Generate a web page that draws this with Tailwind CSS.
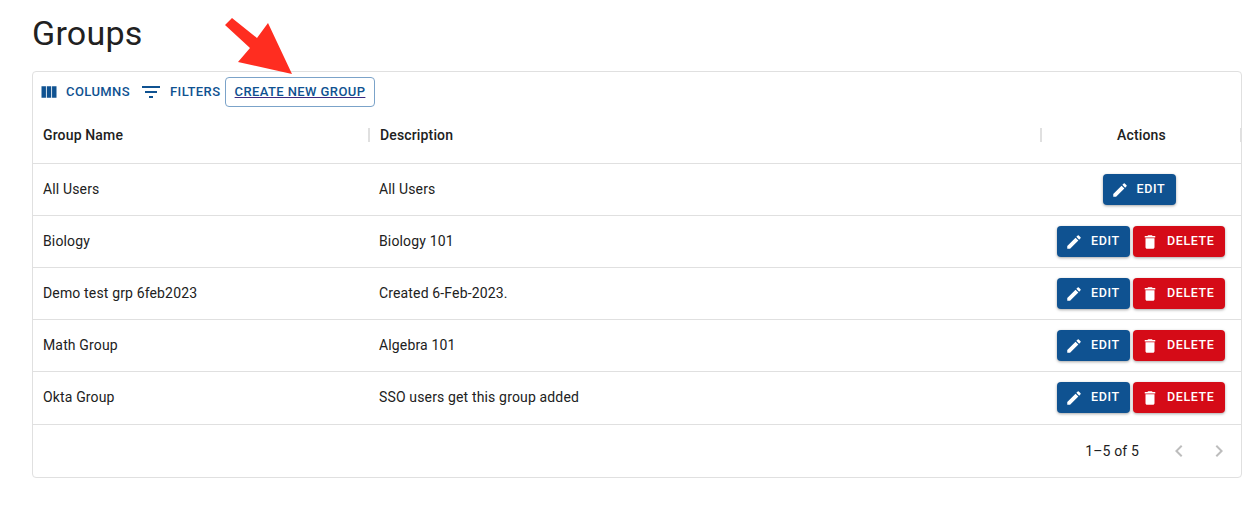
<!doctype html>
<html><head><meta charset="utf-8"><script src="https://cdn.jsdelivr.net/npm/@tailwindcss/browser@4"></script></head>
<body class="bg-white font-['Roboto',sans-serif] text-[#212121]">
<div class="relative w-[1258px] h-[505px] overflow-hidden">
<div class="pl-[32px] pr-[16px]">
<h1 class="h-[71px] pt-[11px] text-[34px] leading-[44px] tracking-[0.25px] font-normal">Groups</h1>
<div class="w-[1210px] h-[407px] border border-[#e0e0e0] rounded-[4px] text-[14px] tracking-[0.15px]">
  <div class="h-[35px] flex items-center pl-[6px] pt-[5px] text-[#0f5291] text-[13px] font-medium tracking-[0.4px]">
    <svg class="w-[20px] h-[20px] mr-[7px]" viewBox="0 0 24 24" fill="#0f5291"><path d="M14.67 5v14H9.33V5zm1 14H21V5h-5.33zm-7.34 0V5H3v14z"/></svg>
    <span class="w-[64px]">COLUMNS</span>
    <svg class="ml-[9px] w-[24px] h-[24px]" viewBox="0 0 24 24" fill="#0f5291"><path d="M10 18h4v-2h-4zM3 6v2h18V6zm3 7h12v-2H6z"/></svg>
    <span class="ml-[7px] w-[50px]">FILTERS</span>
    <a class="ml-[5px] w-[150px] h-[30px] flex items-center justify-center border border-[#7ba3c9] rounded-[4px] underline decoration-[#3b2a80]">CREATE NEW GROUP</a>
  </div>
  <div class="h-[57px] grid grid-cols-[335px_672px_201px] items-center border-b border-[#e0e0e0] font-medium text-[14px] tracking-[0.15px]">
    <div class="pl-[10px]">Group Name</div>
    <div class="pl-[10px] border-l-2 border-[#e0e0e0] h-[14px] flex items-center">Description</div>
    <div class="relative border-l-2 border-[#e0e0e0] h-[14px] flex items-center justify-center">Actions<span class="absolute right-[-1px] top-0 w-[2px] h-[14px] bg-[#e0e0e0]"></span></div>
  </div>

  <div class="h-[52px] grid grid-cols-[336px_672px_200px] items-center border-b border-[#e0e0e0]">
    <div class="pl-[10px]">All Users</div><div class="pl-[10px]">All Users</div>
    <div class="flex justify-center pr-[4px]"><button class="w-[73px] h-[31px] flex items-center rounded-[4px] bg-[#0f5291] text-white text-[12.5px] font-medium tracking-[0.6px] shadow-[0_1px_3px_rgba(0,0,0,0.35)]"><svg class="ml-[8px] mr-[8px] w-[18px] h-[18px]" viewBox="0 0 24 24" fill="#fff"><path d="M3 17.25V21h3.75L17.81 9.94l-3.75-3.75zM20.71 7.04a.996.996 0 0 0 0-1.41l-2.34-2.34a.996.996 0 0 0-1.41 0l-1.83 1.83 3.75 3.75z"/></svg><span class="mb-[1px]">EDIT</span></button></div>
  </div>

  <div class="h-[52px] grid grid-cols-[336px_672px_200px] items-center border-b border-[#e0e0e0]">
    <div class="pl-[10px]">Biology</div><div class="pl-[10px]">Biology 101</div>
    <div class="flex justify-end pr-[16px] gap-[3px]"><button class="w-[73px] h-[31px] flex items-center rounded-[4px] bg-[#0f5291] text-white text-[12.5px] font-medium tracking-[0.6px] shadow-[0_1px_3px_rgba(0,0,0,0.35)]"><svg class="ml-[8px] mr-[8px] w-[18px] h-[18px]" viewBox="0 0 24 24" fill="#fff"><path d="M3 17.25V21h3.75L17.81 9.94l-3.75-3.75zM20.71 7.04a.996.996 0 0 0 0-1.41l-2.34-2.34a.996.996 0 0 0-1.41 0l-1.83 1.83 3.75 3.75z"/></svg><span class="mb-[1px]">EDIT</span></button><button class="w-[92px] h-[31px] flex items-center rounded-[4px] bg-[#d50b17] text-white text-[12.5px] font-medium tracking-[0.6px] shadow-[0_1px_3px_rgba(0,0,0,0.35)]"><svg class="ml-[8px] mr-[8px] w-[18px] h-[18px]" viewBox="0 0 24 24" fill="#fff"><path d="M6 19c0 1.1.9 2 2 2h8c1.1 0 2-.9 2-2V7H6zM19 4h-3.5l-1-1h-5l-1 1H5v2h14z"/></svg><span class="mb-[1px]">DELETE</span></button></div>
  </div>

  <div class="h-[52px] grid grid-cols-[336px_672px_200px] items-center border-b border-[#e0e0e0]">
    <div class="pl-[10px]">Demo test grp 6feb2023</div><div class="pl-[10px]">Created 6-Feb-2023.</div>
    <div class="flex justify-end pr-[16px] gap-[3px]"><button class="w-[73px] h-[31px] flex items-center rounded-[4px] bg-[#0f5291] text-white text-[12.5px] font-medium tracking-[0.6px] shadow-[0_1px_3px_rgba(0,0,0,0.35)]"><svg class="ml-[8px] mr-[8px] w-[18px] h-[18px]" viewBox="0 0 24 24" fill="#fff"><path d="M3 17.25V21h3.75L17.81 9.94l-3.75-3.75zM20.71 7.04a.996.996 0 0 0 0-1.41l-2.34-2.34a.996.996 0 0 0-1.41 0l-1.83 1.83 3.75 3.75z"/></svg><span class="mb-[1px]">EDIT</span></button><button class="w-[92px] h-[31px] flex items-center rounded-[4px] bg-[#d50b17] text-white text-[12.5px] font-medium tracking-[0.6px] shadow-[0_1px_3px_rgba(0,0,0,0.35)]"><svg class="ml-[8px] mr-[8px] w-[18px] h-[18px]" viewBox="0 0 24 24" fill="#fff"><path d="M6 19c0 1.1.9 2 2 2h8c1.1 0 2-.9 2-2V7H6zM19 4h-3.5l-1-1h-5l-1 1H5v2h14z"/></svg><span class="mb-[1px]">DELETE</span></button></div>
  </div>

  <div class="h-[52px] grid grid-cols-[336px_672px_200px] items-center border-b border-[#e0e0e0]">
    <div class="pl-[10px]">Math Group</div><div class="pl-[10px]">Algebra 101</div>
    <div class="flex justify-end pr-[16px] gap-[3px]"><button class="w-[73px] h-[31px] flex items-center rounded-[4px] bg-[#0f5291] text-white text-[12.5px] font-medium tracking-[0.6px] shadow-[0_1px_3px_rgba(0,0,0,0.35)]"><svg class="ml-[8px] mr-[8px] w-[18px] h-[18px]" viewBox="0 0 24 24" fill="#fff"><path d="M3 17.25V21h3.75L17.81 9.94l-3.75-3.75zM20.71 7.04a.996.996 0 0 0 0-1.41l-2.34-2.34a.996.996 0 0 0-1.41 0l-1.83 1.83 3.75 3.75z"/></svg><span class="mb-[1px]">EDIT</span></button><button class="w-[92px] h-[31px] flex items-center rounded-[4px] bg-[#d50b17] text-white text-[12.5px] font-medium tracking-[0.6px] shadow-[0_1px_3px_rgba(0,0,0,0.35)]"><svg class="ml-[8px] mr-[8px] w-[18px] h-[18px]" viewBox="0 0 24 24" fill="#fff"><path d="M6 19c0 1.1.9 2 2 2h8c1.1 0 2-.9 2-2V7H6zM19 4h-3.5l-1-1h-5l-1 1H5v2h14z"/></svg><span class="mb-[1px]">DELETE</span></button></div>
  </div>

  <div class="h-[53px] grid grid-cols-[336px_672px_200px] items-center border-b border-[#e0e0e0]">
    <div class="pl-[10px] pb-[1px]">Okta Group</div><div class="pl-[10px] pb-[1px]">SSO users get this group added</div>
    <div class="flex justify-end pr-[16px] gap-[3px] pb-[1px]"><button class="w-[73px] h-[31px] flex items-center rounded-[4px] bg-[#0f5291] text-white text-[12.5px] font-medium tracking-[0.6px] shadow-[0_1px_3px_rgba(0,0,0,0.35)]"><svg class="ml-[8px] mr-[8px] w-[18px] h-[18px]" viewBox="0 0 24 24" fill="#fff"><path d="M3 17.25V21h3.75L17.81 9.94l-3.75-3.75zM20.71 7.04a.996.996 0 0 0 0-1.41l-2.34-2.34a.996.996 0 0 0-1.41 0l-1.83 1.83 3.75 3.75z"/></svg><span class="mb-[1px]">EDIT</span></button><button class="w-[92px] h-[31px] flex items-center rounded-[4px] bg-[#d50b17] text-white text-[12.5px] font-medium tracking-[0.6px] shadow-[0_1px_3px_rgba(0,0,0,0.35)]"><svg class="ml-[8px] mr-[8px] w-[18px] h-[18px]" viewBox="0 0 24 24" fill="#fff"><path d="M6 19c0 1.1.9 2 2 2h8c1.1 0 2-.9 2-2V7H6zM19 4h-3.5l-1-1h-5l-1 1H5v2h14z"/></svg><span class="mb-[1px]">DELETE</span></button></div>
  </div>

  <div class="h-[52px] flex items-center justify-end pr-[10px] text-[14px]">
    <span class="mr-[28px]">1–5 of 5</span>
    <svg class="w-[24px] h-[24px] mr-[16px]" viewBox="0 0 24 24" fill="#bdbdbd"><path d="M15.41 7.41 14 6l-6 6 6 6 1.41-1.41L10.83 12z"/></svg>
    <svg class="w-[24px] h-[24px]" viewBox="0 0 24 24" fill="#bdbdbd"><path d="M10 6 8.59 7.41 13.17 12l-4.58 4.59L10 18l6-6z"/></svg>
  </div>
</div>
</div>
<svg class="absolute left-0 top-0 pointer-events-none" width="320" height="90" viewBox="0 0 320 90"><polygon points="225,25 232,18 257,38 268,23 292,74 238,62 250,48" fill="#ff2d20"/></svg>
</div>
</body></html>
